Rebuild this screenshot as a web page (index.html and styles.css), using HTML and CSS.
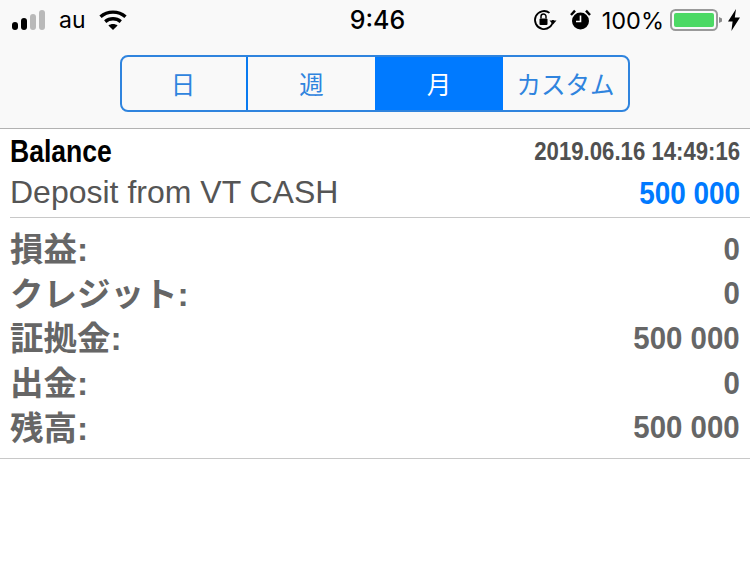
FILE: index.html
```html
<!DOCTYPE html>
<html lang="ja">
<head>
    <meta charset="UTF-8">
    <meta name="viewport" content="width=device-width, initial-scale=1.0">
    <title>Balance</title>
    <link rel="stylesheet" href="styles.css">
</head>
<body>
    <header class="top">
        <div class="status">
            <div class="status-left">
                <svg class="signal" width="34" height="20" viewBox="0 0 34 20">
                    <rect x="0" y="12" width="6" height="8" rx="3" fill="#000"/>
                    <rect x="9" y="8" width="6" height="12" rx="3" fill="#000"/>
                    <rect x="18" y="4" width="6" height="16" rx="3" fill="#b9b9b9"/>
                    <rect x="27" y="0" width="6" height="20" rx="3" fill="#b9b9b9"/>
                </svg>
                <span class="carrier">au</span>
                <svg class="wifi" width="28" height="20" viewBox="0 0 28 20" fill="none" stroke="#000" stroke-width="3.4">
                    <path d="M1.5 6.8C8.5 .6 19.5 .6 26.5 6.8"/>
                    <path d="M6.2 11.6C10.8 7.8 17.2 7.8 21.8 11.6"/>
                    <path d="M14 20L9.4 15.4C12 13.4 16 13.4 18.6 15.4Z" fill="#000" stroke="none"/>
                </svg>
            </div>
            <div class="clock">9:46</div>
            <div class="status-right">
                <svg width="24" height="22" viewBox="0 0 24 22" fill="none" stroke="#000" stroke-width="1.8">
                    <path d="M20 11A9 9 0 1 1 16.5 3.9"/>
                    <path d="M16.5 11.5L23.5 11.5L20 15.5Z" fill="#000" stroke="none"/>
                    <rect x="6.5" y="9.5" width="8" height="6.5" rx="1" fill="#000" stroke="none"/>
                    <path d="M8 9.5V7.5a2.5 2.5 0 0 1 5 0V9.5" stroke-width="1.5"/>
                </svg>
                <svg class="alarm" width="21" height="22" viewBox="0 0 21 22">
                    <circle cx="10.5" cy="12" r="8.5" fill="#000"/>
                    <path d="M10.5 6.5V12.5H6" fill="none" stroke="#fff" stroke-width="1.6"/>
                    <path d="M1 6L5 1.6" stroke="#000" stroke-width="2.4"/>
                    <path d="M20 6L16 1.6" stroke="#000" stroke-width="2.4"/>
                </svg>
                <span class="percent">100%</span>
                <svg class="battery" width="52" height="22" viewBox="0 0 52 22">
                    <rect x="1" y="1" width="46" height="20" rx="4.5" fill="none" stroke="#9a9a9a" stroke-width="2"/>
                    <rect x="4" y="4" width="40" height="14" rx="2" fill="#4cd964"/>
                    <path d="M49 8L52 9.5V12.5L49 14Z" fill="#8a8a8a"/>
                </svg>
                <svg class="bolt" width="12" height="22" viewBox="0 0 12 22">
                    <path d="M8 0L0 12.5H4.6L3.4 22L12 8.6H6.8Z" fill="#000"/>
                </svg>
            </div>
        </div>
        <nav class="tabs">
            <div class="tab">日</div>
            <div class="tab">週</div>
            <div class="tab active">月</div>
            <div class="tab">カスタム</div>
        </nav>
    </header>

    <main>
        <section class="deal">
            <div class="row">
                <span class="title">Balance</span>
                <span class="date">2019.06.16 14:49:16</span>
            </div>
            <div class="row">
                <span class="comment">Deposit from VT CASH</span>
                <span class="amount">500 000</span>
            </div>
        </section>
        <section class="summary">
            <div class="line"><span class="label">損益:</span><span class="num">0</span></div>
            <div class="line"><span class="label">クレジット:</span><span class="num">0</span></div>
            <div class="line"><span class="label">証拠金:</span><span class="num">500 000</span></div>
            <div class="line"><span class="label">出金:</span><span class="num">0</span></div>
            <div class="line"><span class="label">残高:</span><span class="num">500 000</span></div>
        </section>
    </main>
</body>
</html>
```
FILE: styles.css
```css
html, body {
    margin: 0;
    padding: 0;
}

body {
    width: 750px;
    height: 578px;
    overflow: hidden;
    background-color: #ffffff;
    font-family: "Liberation Sans", "Noto Sans CJK JP", sans-serif;
}

.top {
    height: 129px;
    box-sizing: border-box;
    background-color: #f9f9f9;
    border-bottom: 1px solid #b2b2b2;
}

.status {
    height: 40px;
    display: flex;
    align-items: center;
    justify-content: space-between;
    padding: 0 10px 0 12px;
    color: #000;
}

.status-left, .status-right {
    flex: 1;
    display: flex;
    align-items: center;
}

.status-right {
    justify-content: flex-end;
}

.carrier {
    font-family: "Inter", sans-serif;
    font-size: 23px;
    margin: 0 13px;
}

.clock {
    font-family: "Inter", sans-serif;
    font-size: 25px;
    font-weight: 500;
    margin-left: 3px;
}

.alarm {
    margin-left: 13px;
}

.percent {
    font-family: "Inter", sans-serif;
    font-size: 23.5px;
    margin: 0 6px 0 11px;
}

.bolt {
    margin-left: 6px;
}

.tabs {
    width: 510px;
    height: 57px;
    box-sizing: border-box;
    margin: 15px auto 0;
    display: grid;
    grid-template-columns: 126px 127px 128px 125px;
    border: 2px solid #2f84de;
    border-radius: 8px;
    overflow: hidden;
}

.tab {
    display: flex;
    align-items: center;
    justify-content: center;
    font-size: 24.5px;
    color: #2f84de;
}

.tab:first-child {
    border-right: 2px solid #0a7bf0;
    padding-right: 2px;
}

.tab.active {
    background-color: #007aff;
    color: #ffffff;
}

.deal {
    margin-left: 10px;
    padding: 2px 10px 0 0;
    height: 89px;
    box-sizing: border-box;
    border-bottom: 1px solid #c8c8c8;
}

.row {
    display: flex;
    justify-content: space-between;
    align-items: center;
    height: 41px;
}

.title {
    font-family: "Liberation Sans", sans-serif;
    font-size: 32px;
    font-weight: 700;
    color: #000;
    transform: scaleX(.83);
    transform-origin: left center;
}

.date {
    font-size: 25px;
    font-weight: 700;
    color: #505050;
    transform: scaleX(.887);
    transform-origin: right center;
}

.comment {
    font-family: "Liberation Sans", sans-serif;
    font-size: 32px;
    color: #555;
}

.amount {
    font-size: 31px;
    font-weight: 700;
    color: #007aff;
    margin-top: 2px;
    transform: scaleX(.9);
    transform-origin: right center;
}

.summary {
    height: 241px;
    box-sizing: border-box;
    padding: 9px 10px 0;
    border-bottom: 1px solid #c8c8c8;
}

.line {
    height: 44.6px;
    display: flex;
    justify-content: space-between;
    align-items: center;
    font-size: 33.5px;
    font-weight: 700;
    color: #666;
}

.label {
    margin-top: -5px;
}

.num {
    font-size: 32px;
    transform: scaleX(.92);
    transform-origin: right center;
}
```
